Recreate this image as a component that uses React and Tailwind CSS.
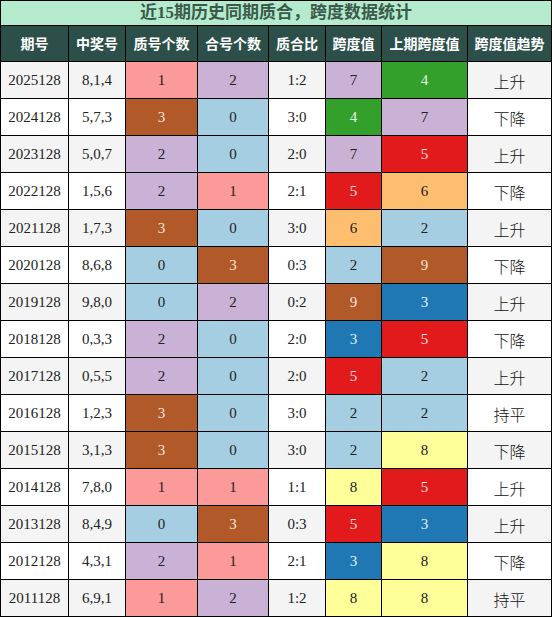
import React from "react";

const rows = [
  ["2025128", "8,1,4", 1, 2, "1:2", 7, 4, "上升"],
  ["2024128", "5,7,3", 3, 0, "3:0", 4, 7, "下降"],
  ["2023128", "5,0,7", 2, 0, "2:0", 7, 5, "上升"],
  ["2022128", "1,5,6", 2, 1, "2:1", 5, 6, "下降"],
  ["2021128", "1,7,3", 3, 0, "3:0", 6, 2, "上升"],
  ["2020128", "8,6,8", 0, 3, "0:3", 2, 9, "下降"],
  ["2019128", "9,8,0", 0, 2, "0:2", 9, 3, "上升"],
  ["2018128", "0,3,3", 2, 0, "2:0", 3, 5, "下降"],
  ["2017128", "0,5,5", 2, 0, "2:0", 5, 2, "上升"],
  ["2016128", "1,2,3", 3, 0, "3:0", 2, 2, "持平"],
  ["2015128", "3,1,3", 3, 0, "3:0", 2, 8, "下降"],
  ["2014128", "7,8,0", 1, 1, "1:1", 8, 5, "上升"],
  ["2013128", "8,4,9", 0, 3, "0:3", 5, 3, "上升"],
  ["2012128", "4,3,1", 2, 1, "2:1", 3, 8, "下降"],
  ["2011128", "6,9,1", 1, 2, "1:2", 8, 8, "持平"],
];

const countColor = {
  0: "bg-[#a6cee3] text-[#222]",
  1: "bg-[#fb9a99] text-[#222]",
  2: "bg-[#cab2d6] text-[#222]",
  3: "bg-[#b15928] text-[#f3e6dc]",
};

const spanColor = {
  2: "bg-[#a6cee3] text-[#222]",
  3: "bg-[#1f78b4] text-[#e6eef6]",
  4: "bg-[#33a02c] text-[#e8f4e6]",
  5: "bg-[#e31a1c] text-[#fbe3e3]",
  6: "bg-[#fdbf6f] text-[#222]",
  7: "bg-[#cab2d6] text-[#222]",
  8: "bg-[#ffff99] text-[#222]",
  9: "bg-[#b15928] text-[#f3e6dc]",
};

const headers = ["期号", "中奖号", "质号个数", "合号个数", "质合比", "跨度值", "上期跨度值", "跨度值趋势"];

const serif = "font-['Liberation_Serif','Noto_Sans_CJK_SC',serif]";
const sans = "font-['Noto_Sans_CJK_SC','Noto_Sans',sans-serif]";

export default function App() {
  return (
    <div className="w-[552px] h-[617px] bg-black p-px">
      <div className="grid grid-cols-[67px_56px_71px_70px_56px_55px_85px_83px] grid-rows-[24px_35px_repeat(15,36px)] gap-px">
        <div className={`col-span-8 bg-[#b3ebcc] flex items-center justify-center text-[17px] font-bold text-[#3b5a4c] ${serif}`}>
          近15期历史同期质合，跨度数据统计
        </div>
        {headers.map((h) => (
          <div key={h} className={`bg-[#2d4f4a] text-white text-[14px] font-bold flex items-center justify-center ${sans}`}>
            {h}
          </div>
        ))}
        {rows.map((r, i) => {
          const base = i % 2 === 0 ? "bg-[#f4f4f4]" : "bg-white";
          const cell = "flex items-center justify-center text-[15px]";
          return (
            <React.Fragment key={r[0]}>
              <div className={`${cell} ${base} text-[#222] ${serif}`}>{r[0]}</div>
              <div className={`${cell} ${base} text-[#222] ${serif}`}>{r[1]}</div>
              <div className={`${cell} ${countColor[r[2]]} ${serif}`}>{r[2]}</div>
              <div className={`${cell} ${countColor[r[3]]} ${serif}`}>{r[3]}</div>
              <div className={`${cell} ${base} text-[#222] ${serif}`}>{r[4]}</div>
              <div className={`${cell} ${spanColor[r[5]]} ${serif}`}>{r[5]}</div>
              <div className={`${cell} ${spanColor[r[6]]} ${serif}`}>{r[6]}</div>
              <div className={`flex items-center justify-center text-[16px] font-light pt-0.5 ${base} text-[#111] ${sans}`}>{r[7]}</div>
            </React.Fragment>
          );
        })}
      </div>
    </div>
  );
}
